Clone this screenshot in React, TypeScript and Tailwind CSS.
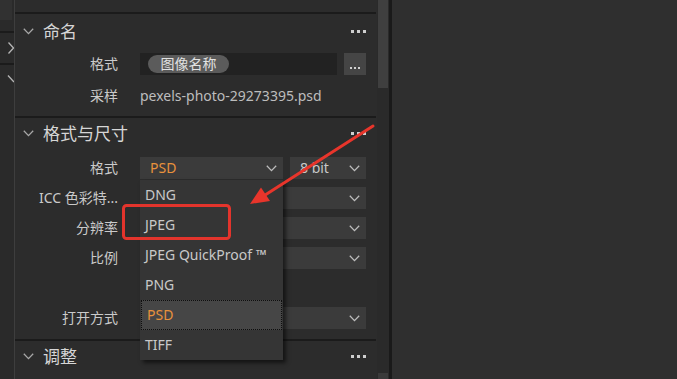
import React from "react";

const font = "font-['Noto_Sans','Noto_Sans_CJK_SC',sans-serif]";

function Chevron({ className = "" }: { className?: string }) {
  return (
    <svg width="11" height="7" viewBox="0 0 11 7" className={className}>
      <path d="M0.8 0.8 L5.5 5.6 L10.2 0.8" fill="none" stroke="currentColor" strokeWidth="1.3" />
    </svg>
  );
}

function Dots() {
  return (
    <div className="flex gap-[3px]">
      <span className="w-[3px] h-[3px] bg-[#cfcfcf]" />
      <span className="w-[3px] h-[3px] bg-[#cfcfcf]" />
      <span className="w-[3px] h-[3px] bg-[#cfcfcf]" />
    </div>
  );
}

function SectionHeader({ title, h }: { title: string; h: string }) {
  return (
    <div className={`flex items-center ${h} pr-[11px]`}>
      <Chevron className="ml-[8px] text-[#a8a8a8]" />
      <span className="ml-[9px] text-[17px] text-[#d6d6d6] leading-none">{title}</span>
      <div className="ml-auto">
        <Dots />
      </div>
    </div>
  );
}

function Row({ label, children, h = "h-[30px]" }: { label: string; children?: React.ReactNode; h?: string }) {
  return (
    <div className={`flex items-center ${h} pr-[11px]`}>
      <div className="w-[103px] text-right text-[14px] text-[#cacaca] leading-none whitespace-nowrap">{label}</div>
      <div className="ml-[22px] flex-1 flex items-center gap-[7px]">{children}</div>
    </div>
  );
}

function Select({ value, className = "", orange = false }: { value?: string; className?: string; orange?: boolean }) {
  return (
    <div className={`h-[22px] bg-[#3b3b3b] flex items-center pl-[10px] pr-[6px] ${className}`}>
      <span className={`text-[14px] leading-none ${orange ? "text-[#e8923c]" : "text-[#c8c8c8]"}`}>{value}</span>
      <Chevron className="ml-auto text-[#bdbdbd]" />
    </div>
  );
}

const Divider = () => <div className="h-[2px] bg-[#1b1b1b] mr-[1px]" />;

export default function App() {
  const items = ["DNG", "JPEG", "JPEG QuickProof ™", "PNG", "PSD", "TIFF"];
  return (
    <div className={`relative w-[677px] h-[379px] overflow-hidden bg-[#2e2e2e] flex ${font}`}>
      {/* left collapsed strip */}
      <div className="w-[14px] bg-[#2a2a2a] flex flex-col text-[#b5b5b5]">
        <div className="h-[20px] w-[12px] bg-[#313131]" />
        <div className="h-[11px]" />
        <div className="h-[2px] bg-[#1b1b1b]" />
        <div className="h-[30px] flex items-center justify-end">
          <svg width="6" height="12" viewBox="0 0 6 12">
            <path d="M0.5 0.5 L5.5 6 L0.5 11.5" fill="none" stroke="currentColor" strokeWidth="1.3" />
          </svg>
        </div>
        <div className="h-[2px] bg-[#1b1b1b]" />
        <div className="h-[10px]" />
        <svg width="14" height="10" viewBox="0 0 14 10">
          <path d="M8 0.5 L14 7" fill="none" stroke="currentColor" strokeWidth="1.3" />
        </svg>
      </div>
      <div className="w-[1px] bg-[#3e3e3e]" />

      {/* main panel */}
      <div className="w-[362px] bg-[#2c2c2c] flex flex-col">
        <div className="h-[12px]" />
        <Divider />
        <SectionHeader title="命名" h="h-[34px]" />
        <Row label="格式" h="h-[32px]">
          <div className="w-[197px] h-[22px] bg-[#222222] flex items-center pl-[8px]">
            <span className="h-[18px] w-[81px] rounded-full bg-[#5b5b5b] text-[14px] text-[#e2e2e2] flex items-center justify-center leading-none">
              图像名称
            </span>
          </div>
          <div className="w-[22px] h-[22px] bg-[#454545] flex items-end justify-center pb-[6px]">
            <Dots2 />
          </div>
        </Row>
        <Row label="采样" h="h-[32px]">
          <span className="text-[14px] text-[#bdbdbd] leading-none">pexels-photo-29273395.psd</span>
        </Row>
        <div className="h-[4px]" />
        <Divider />
        <SectionHeader title="格式与尺寸" h="h-[30px]" />
        <div className="h-[5px]" />
        <Row label="格式">
          <Select value="PSD" orange className="w-[143px]" />
          <Select value="8 bit" className="flex-1" />
        </Row>
        <Row label="ICC 色彩特...">
          <Select className="flex-1" />
        </Row>
        <Row label="分辨率">
          <Select className="flex-1" />
        </Row>
        <Row label="比例">
          <Select className="flex-1" />
        </Row>
        <Row label="" />
        <Row label="打开方式">
          <Select className="flex-1" />
        </Row>
        <div className="h-[6px]" />
        <Divider />
        <SectionHeader title="调整" h="h-[30px]" />
      </div>

      {/* scrollbar */}
      <div className="w-[12px] bg-[#2a2a2a] flex flex-col justify-between pl-[1px]">
        <div className="h-[88px] w-[10px] bg-[#3f3f3f]" />
        <div className="h-[6px] w-[10px] bg-[#3a3a3a]" />
      </div>
      <div className="w-[3px] bg-[#1a1a1a]" />
      <div className="flex-1 bg-[#2f2f2f]" />

      {/* dropdown list */}
      <div className="absolute left-[140px] top-[180px] w-[143px] bg-[#353535] shadow-[3px_3px_4px_rgba(0,0,0,0.55)] flex flex-col">
        {items.map((it) => (
          <div
            key={it}
            className={`h-[30px] flex items-center pl-[5px] text-[14px] leading-none ${
              it === "PSD"
                ? "bg-[#464646] text-[#e8923c] border border-dotted border-[#0e0e0e] mx-[1px] pl-[4px]"
                : "text-[#c9c9c9]"
            }`}
          >
            {it}
          </div>
        ))}
      </div>

      {/* annotation */}
      <svg className="absolute inset-0 pointer-events-none" width="677" height="379" viewBox="0 0 677 379">
        <rect x="123.5" y="205.5" width="106" height="33" rx="3" fill="none" stroke="#e3342c" strokeWidth="3" />
        <line x1="373" y1="126" x2="262" y2="197" stroke="#e8352b" strokeWidth="3" strokeLinecap="round" />
        <polygon points="250,204 261,187.5 270,201" fill="#e8352b" />
      </svg>
    </div>
  );
}

function Dots2() {
  return (
    <div className="flex gap-[2px]">
      <span className="w-[2px] h-[2px] bg-[#d0d0d0]" />
      <span className="w-[2px] h-[2px] bg-[#d0d0d0]" />
      <span className="w-[2px] h-[2px] bg-[#d0d0d0]" />
    </div>
  );
}
